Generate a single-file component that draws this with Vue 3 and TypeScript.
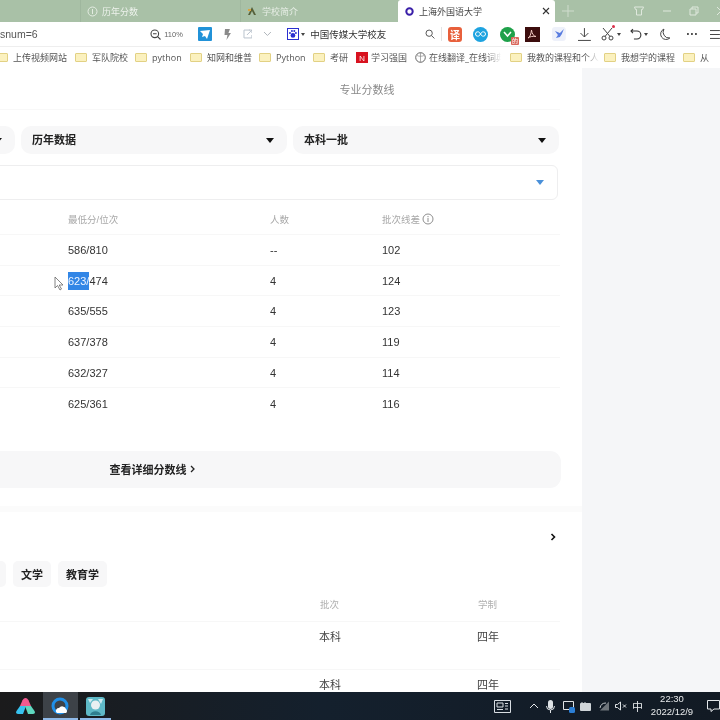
<script setup lang="ts">
interface Mark { kind: 'folder' | 'red' | 'globe'; text: string; w: number; fade?: boolean }
const marks: Mark[] = [
  { kind: 'folder', text: '上传视频网站', w: 79 },
  { kind: 'folder', text: '军队院校', w: 60 },
  { kind: 'folder', text: 'python', w: 55 },
  { kind: 'folder', text: '知网和维普', w: 69 },
  { kind: 'folder', text: 'Python', w: 54 },
  { kind: 'folder', text: '考研', w: 43 },
  { kind: 'red', text: '学习强国', w: 59 },
  { kind: 'globe', text: '在线翻译_在线词典', w: 95, fade: true },
  { kind: 'folder', text: '我教的课程和个人', w: 94, fade: true },
  { kind: 'folder', text: '我想学的课程', w: 79 },
  { kind: 'folder', text: '从', w: 30 },
]
const rows = [
  { score: '586/810', n: '--', diff: '102' },
  { score: '623/474', n: '4', diff: '124', picked: true },
  { score: '635/555', n: '4', diff: '123' },
  { score: '637/378', n: '4', diff: '119' },
  { score: '632/327', n: '4', diff: '114' },
  { score: '625/361', n: '4', diff: '116' },
]
</script>

<template>
  <div class="screen">
    <header class="tabs">
      <div class="tab t1">
        <svg width="11" height="11" viewBox="0 0 11 11"><circle cx="5.5" cy="5.5" r="4.5" fill="none" stroke="#e4ece2" /><path d="M5.5 3v5" stroke="#e4ece2" /></svg>
        <span>历年分数</span>
      </div>
      <div class="tab t2">
        <svg width="11" height="11" viewBox="0 0 11 11"><path d="M5 1l4 8H7L5 5 3 9H1z" fill="#55603a" /><path d="M1 3h3v2H1z" fill="#d9a441" /></svg>
        <span>学校简介</span>
      </div>
      <div class="tab active">
        <svg width="9" height="9" viewBox="0 0 9 9"><circle cx="4.5" cy="4.5" r="3.2" fill="none" stroke="#3a1fa8" stroke-width="2" /></svg>
        <span>上海外国语大学</span>
        <svg class="close" width="8" height="8" viewBox="0 0 8 8"><path d="M1 1l6 6M7 1L1 7" stroke="#333" stroke-width="1.1" /></svg>
      </div>
      <svg class="plus" width="12" height="12" viewBox="0 0 12 12"><path d="M6 0v12M0 6h12" stroke="#cfdccd" stroke-width="1" /></svg>
      <div class="winbtns">
        <svg width="12" height="12" viewBox="0 0 12 12"><path d="M1.5 2h9l-1 2.5h-1V10h-5V4.500h-1z" fill="none" stroke="#dfe8dd" /></svg>
        <svg width="10" height="10" viewBox="0 0 10 10"><path d="M1 5h8" stroke="#dfe8dd" /></svg>
        <svg width="10" height="10" viewBox="0 0 10 10"><path d="M1 3h6v6H1zM3 3V1h6v6H7" fill="none" stroke="#dfe8dd" /></svg>
        <svg width="10" height="10" viewBox="0 0 10 10"><path d="M1 1l8 8M9 1L1 9" stroke="#dfe8dd" /></svg>
      </div>
    </header>

    <div class="toolbar">
      <span class="url">snum=6</span>
      <svg class="zoomi" width="11" height="11" viewBox="0 0 11 11"><circle cx="4.800" cy="4.800" r="3.800" fill="none" stroke="#444" stroke-width="1.100" /><path d="M7.600 7.600L10.500 10.500M3 4.800h3.600" stroke="#444" stroke-width="1.100" /></svg>
      <span class="pct">110%</span>
      <span class="send"><svg width="10" height="9" viewBox="0 0 10 9"><path d="M0 1l10-1-3 9-2-3-3 1 1-3z" fill="#fff" /></svg></span>
      <svg class="bolt" width="7" height="11" viewBox="0 0 7 11"><path d="M1 0h5L4.500 4H7L2.500 11 3.500 6H.5z" fill="#8a8a8a" /></svg>
      <svg class="share" width="10" height="10" viewBox="0 0 10 10"><path d="M7 1h-6v8h8V6M4 6l5-5M6 1h3v3" fill="none" stroke="#b9c2cc" /></svg>
      <svg class="chev" width="9" height="6" viewBox="0 0 9 6"><path d="M1 1l3.500 3.500L8 1" fill="none" stroke="#aeb4ba" /></svg>
      <span class="paw"><svg width="10" height="10" viewBox="0 0 10 10"><circle cx="5" cy="6.500" r="2.400" fill="#2a2fd0" /><circle cx="2" cy="4" r="1" fill="#2a2fd0" /><circle cx="8" cy="4" r="1" fill="#2a2fd0" /><circle cx="4" cy="2" r="1" fill="#2a2fd0" /><circle cx="6.400" cy="2" r="1" fill="#2a2fd0" /></svg></span>
      <i class="mini-caret"></i>
      <span class="query">中国传媒大学校友</span>
      <svg class="mag" width="10" height="10" viewBox="0 0 10 10"><circle cx="4.200" cy="4.200" r="3.200" fill="none" stroke="#555" /><path d="M6.600 6.600L9.500 9.500" stroke="#555" /></svg>
      <i class="vsep"></i>
      <span class="ext red">译</span>
      <span class="ext cyan"><svg width="11" height="6" viewBox="0 0 11 6"><path d="M5.500 3C4.500 1 3.500.8 2.700.8a2.200 2.200 0 0 0 0 4.400C3.500 5.200 4.500 5 5.500 3c1-2 2-2.200 2.800-2.200a2.200 2.200 0 0 1 0 4.400C7.500 5.200 6.500 5 5.500 3z" fill="none" stroke="#fff" /></svg></span>
      <span class="ext green">
        <svg width="9" height="9" viewBox="0 0 9 9"><path d="M1 2l3.500 4L8 2" fill="none" stroke="#fff" stroke-width="1.500" /></svg>
        <b>的</b>
      </span>
      <span class="ext pdf"><svg width="10" height="10" viewBox="0 0 10 10"><path d="M1 9c2-1 3-4 3.500-8 .5 4 2 6 4.500 6.500-3-.5-6 0-8 1.500z" fill="none" stroke="#f0c8c0" stroke-width="1" /></svg></span>
      <svg class="bird" width="14" height="14" viewBox="0 0 14 14"><rect width="14" height="14" rx="3" fill="#eef1fa" /><path d="M12 2L8 6 3 4l3 4-2 3 4-1 2-3z" fill="#5a7de0" /></svg>
      <svg class="dl" width="13" height="13" viewBox="0 0 13 13"><path d="M6.500 0v9M2.500 5l4 4 4-4M0 12.500h13" fill="none" stroke="#444" /></svg>
      <span class="scissor">
        <svg width="14" height="14" viewBox="0 0 14 14"><circle cx="3" cy="11" r="2" fill="none" stroke="#444" /><circle cx="10" cy="11" r="2" fill="none" stroke="#444" /><path d="M4 9.500L11 1M9 9.500L2 1" stroke="#444" /></svg>
        <i class="dot"></i>
      </span>
      <i class="mini-caret dark"></i>
      <svg class="undo" width="13" height="12" viewBox="0 0 13 12"><path d="M1 3h6a4 4 0 0 1 0 8H4M3 1L1 3l2 2" fill="none" stroke="#333" stroke-width="1.100" /></svg>
      <i class="mini-caret dark"></i>
      <svg class="moon" width="12" height="13" viewBox="0 0 12 13"><path d="M5 1a5.500 5.500 0 1 0 6 9A6 6 0 0 1 5 1z" fill="none" stroke="#444" /></svg>
      <span class="dots">···</span>
      <svg class="menu" width="10" height="9" viewBox="0 0 10 9"><path d="M0 .5h10M0 4.500h10M0 8.500h10" stroke="#444" /></svg>
    </div>

    <nav class="marks">
      <div v-for="m in marks" :key="m.text" class="mark" :class="{ tight: m.kind !== 'folder' }" :style="{ width: m.w + 'px' }">
        <i v-if="m.kind === 'folder'" class="folder"></i>
        <i v-else-if="m.kind === 'red'" class="redmark">N</i>
        <svg v-else class="globe" width="11" height="11" viewBox="0 0 11 11"><circle cx="5.500" cy="5.500" r="4.800" fill="none" stroke="#666" /><path d="M5.500 .7v9.600M2 3.500c2 1 5 1 7 0" fill="none" stroke="#888" stroke-width=".7" /></svg>
        <span :class="{ fade: m.fade }">{{ m.text }}</span>
      </div>
    </nav>

    <div class="body">
      <main class="page">
        <div class="sheet">
          <section class="scores">
            <h2 class="title">专业分数线</h2>
            <div class="selects">
              <div class="pill"><i class="caret"></i></div>
              <div class="pill"><span>历年数据</span><i class="caret"></i></div>
              <div class="pill"><span>本科一批</span><i class="caret"></i></div>
            </div>
            <div class="major"><i class="caret blue"></i></div>
            <div class="row head">
              <span>最低分/位次</span>
              <span>人数</span>
              <span class="withinfo">批次线差
                <svg width="12" height="12" viewBox="0 0 12 12"><circle cx="6" cy="6" r="5" fill="none" stroke="#8e8e8e" /><path d="M6 5v4M6 3v1.200" stroke="#8e8e8e" /></svg>
              </span>
            </div>
            <div v-for="r in rows" :key="r.score" class="row">
              <span v-if="r.picked" class="scorecell">
                <svg class="cursor" width="10" height="15" viewBox="0 0 10 15"><path d="M1 1v11l2.500-2.500L6 14l1.500-1-2.300-4H9z" fill="#fff" stroke="#666" stroke-width=".8" /></svg>
                <mark>623/</mark>474
              </span>
              <span v-else>{{ r.score }}</span>
              <span>{{ r.n }}</span>
              <span>{{ r.diff }}</span>
            </div>
            <button class="detail">查看详细分数线 <svg width="5" height="8" viewBox="0 0 5 8"><path d="M1 1l3 3-3 3" fill="none" stroke="#222" stroke-width="1.300" /></svg></button>
          </section>

          <section class="majors">
            <div class="morebar">
              <svg width="6" height="8" viewBox="0 0 6 8"><path d="M1.500 1l3 3-3 3" fill="none" stroke="#111" stroke-width="1.600" /></svg>
            </div>
            <div class="tags">
              <span class="tag first"></span>
              <span class="tag">文学</span>
              <span class="tag">教育学</span>
            </div>
            <div class="mrow mhead"><span>批次</span><span>学制</span></div>
            <div class="mrow"><span>本科</span><span>四年</span></div>
            <div class="mrow"><span>本科</span><span>四年</span></div>
          </section>
        </div>
      </main>
      <aside class="side"></aside>
    </div>

    <footer class="taskbar">
      <div class="apps">
        <span class="app">
          <svg width="19" height="17" viewBox="0 0 19 17"><path d="M9.500 0c1.500 0 2.300 1 3 2.300L15 8H4l2.500-5.700C7.200 1 8 0 9.500 0z" fill="#f25a8f" /><path d="M4 8h6l-3 8H2C.300 16-.5 14.500.5 13z" fill="#37c3f0" /><path d="M9 8h6l3.500 5c1 1.500.2 3-1.500 3h-5z" fill="#5fd8c0" /></svg>
        </span>
        <span class="app on">
          <svg width="19" height="19" viewBox="0 0 19 19"><circle cx="9" cy="9" r="7" fill="none" stroke="#1f8fe8" stroke-width="3" /><path d="M5 15a3 3 0 0 1 3-4 4 4 0 0 1 7 1 2.500 2.500 0 0 1 0 4H6z" fill="#fff" /></svg>
        </span>
        <span class="app">
          <svg width="19" height="19" viewBox="0 0 19 19"><rect width="19" height="19" rx="3" fill="#5fb9c7" /><circle cx="9.500" cy="8" r="4.500" fill="#e8f0f2" /><path d="M4 18c1-5 10-5 11 0z" fill="#2f7f90" /><path d="M2 2h5L4 6zM12 2h5l-2 5z" fill="#cfeaf0" /></svg>
        </span>
      </div>
      <div class="tray">
        <svg class="news" width="17" height="13" viewBox="0 0 17 13"><path d="M.5.5h16v12H.500zM3 3h6v4H3zM3 9.500h6M11 3.500h3M11 6h3M11 9h3" fill="none" stroke="#d8dde2" /></svg>
        <svg class="up" width="10" height="6" viewBox="0 0 10 6"><path d="M1 5l4-4 4 4" fill="none" stroke="#e4e7ea" /></svg>
        <svg class="mic" width="9" height="13" viewBox="0 0 9 13"><rect x="2" width="5" height="9" rx="2.500" fill="#dfe3e6" /><path d="M.5 6a4 4 0 0 0 8 0M4.500 10v3" fill="none" stroke="#dfe3e6" /></svg>
        <svg class="screenico" width="13" height="13" viewBox="0 0 13 13"><path d="M.5 1.500h10v8H.500z" fill="none" stroke="#dfe3e6" /><rect x="6" y="7" width="6" height="6" rx="1.500" fill="#2c7fd6" /></svg>
        <svg class="batt" width="12" height="9" viewBox="0 0 12 9"><rect y="1" width="11" height="8" rx="1" fill="#cfd4d8" /><path d="M2 0v2M5 0v2" stroke="#cfd4d8" /></svg>
        <svg class="wifi" width="11" height="10" viewBox="0 0 11 10"><path d="M1 9.500L10 .5v9z" fill="#6e747a" /><path d="M1 7a6 6 0 0 1 6-5" fill="none" stroke="#bfc4c8" /></svg>
        <svg class="speaker" width="12" height="10" viewBox="0 0 12 10"><path d="M.5 3.500h2L5.500 1v8l-3-2.500h-2zM8 3.500l3 3M11 3.500l-3 3" fill="none" stroke="#dfe3e6" /></svg>
        <span class="ime">中</span>
        <div class="clock"><span>22:30</span><span>2022/12/9</span></div>
        <svg class="notice" width="13" height="12" viewBox="0 0 13 12"><path d="M.5.5h12v8.500H7L4 11.500V9H.5z" fill="none" stroke="#e4e7ea" /></svg>
      </div>
    </footer>
  </div>
</template>

<style scoped>
.screen {
  width: 720px;
  height: 720px;
  display: flex;
  flex-direction: column;
  overflow: hidden;
  background: #fff;
  color: #333;
  font-family: "Liberation Sans", "Noto Sans CJK SC", sans-serif;
  filter: blur(0.45px);
}
.tabs {
  height: 22px;
  flex: none;
  background: #a9c1a7;
  display: flex;
  align-items: stretch;
  padding-left: 80px;
  font-size: 9px;
  color: #edf2ec;
}
.tab {
  display: flex;
  align-items: center;
  gap: 4px;
  border-left: 1px solid #9fb79e;
  padding-left: 6px;
}
.t1 { width: 160px; padding-left: 6px; box-sizing: border-box; }
.t2 { width: 158px; box-sizing: border-box; padding-left: 6px; color: #e6ede5; }
.active {
  width: 157px;
  box-sizing: border-box;
  background: #fff;
  color: #444;
  border: 0;
  padding-left: 7px;
  border-radius: 3px 3px 0 0;
}
.active span { margin-left: 1px; }
.close { margin-left: auto; margin-right: 5px; }
.plus { align-self: center; margin-left: 7px; }
.winbtns {
  margin-left: auto;
  display: flex;
  align-items: center;
  gap: 17px;
  margin-right: -6px;
}
.toolbar {
  height: 24px;
  flex: none;
  display: flex;
  align-items: center;
  background: #fff;
  border-bottom: 1px solid #eeeeee;
  box-sizing: content-box;
}
.url { font-size: 10.5px; color: #555; width: 152px; }
.pct { font-size: 7.5px; color: #666; margin-left: 3px; width: 32px; }
.send {
  width: 14px; height: 14px; background: #2192d8; display: flex; align-items: center; justify-content: center;
  border-radius: 1px; margin-left: 2px;
}
.bolt { margin-left: 12px; }
.share { margin-left: 12px; }
.chev { margin-left: 11px; }
.paw {
  margin-left: 15px; width: 12px; height: 12px; border: 1px solid #2a2fd0; box-sizing: border-box;
  display: flex; align-items: center; justify-content: center; overflow: hidden;
}
.mini-caret {
  width: 0; height: 0; border: 2px solid transparent; border-top: 3px solid #444; border-bottom: 0; margin-left: 2px;
}
.query { font-size: 9.5px; color: #333; margin-left: 5px; width: 116px; }
.vsep { width: 1px; height: 14px; background: #e3e3e3; margin-left: 6px; }
.ext {
  width: 15px; height: 15px; display: flex; align-items: center; justify-content: center; position: relative;
  font-size: 10px; color: #fff; border-radius: 3px;
}
.red { background: #e8603c; margin-left: 6px; font-weight: 700; }
.cyan { background: #1ea3e0; border-radius: 50%; margin-left: 11px; }
.green { background: #1fa14a; border-radius: 50%; margin-left: 12px; }
.green b {
  position: absolute; right: -4px; bottom: -3px; font-size: 6px; background: #d9665a; padding: 0 1px; border-radius: 1px; font-weight: 400; line-height: 8px;
}
.pdf { background: #3c0d0d; border-radius: 0; margin-left: 10px; }
.bird { margin-left: 12px; }
.dl { margin-left: 12px; }
.scissor { margin-left: 10px; position: relative; display: flex; }
.dot { position: absolute; right: 0; top: -2px; width: 3px; height: 3px; border-radius: 50%; background: #d9304a; }
.dark { margin-left: 2px; }
.undo { margin-left: 9px; }
.moon { margin-left: 11px; }
.dots { margin-left: 15px; font-size: 12px; font-weight: 700; color: #444; width: 14px; }
.menu { margin-left: 10px; }
.zoomi { flex: none; }

.marks {
  height: 21px;
  flex: none;
  display: flex;
  align-items: center;
  margin-left: -4px;
  font-family: "Open Sans", "Noto Sans CJK SC", sans-serif;
  font-size: 9px;
  color: #555;
  background: #fff;
  white-space: nowrap;
  overflow: hidden;
}
.mark { display: flex; align-items: center; gap: 5px; flex: none; overflow: hidden; }
.tight { gap: 3px; }
.fade {
  width: 72px;
  overflow: hidden;
  -webkit-mask-image: linear-gradient(90deg, #000 80%, transparent);
  mask-image: linear-gradient(90deg, #000 80%, transparent);
}
.folder {
  width: 12px; height: 9px; flex: none; background: #fbf1bf; border: 1px solid #e2d184; box-sizing: border-box; border-radius: 1px;
}
.redmark {
  width: 12px; height: 11px; flex: none; background: #d8121f; color: #fff; font-size: 8px; font-style: normal; text-align: center; line-height: 11px;
}
.globe { flex: none; }

.body { flex: 1; display: flex; min-height: 0; overflow: hidden; }
.page { width: 582px; flex: none; background: #fff; overflow: hidden; }
.side { flex: 1; background: #f5f6f8; }
.sheet { width: 782px; margin-left: -200px; }

.scores { height: 438px; padding-right: 22px; box-sizing: border-box; }
.title {
  margin: 0;
  height: 42px;
  line-height: 44px;
  border-bottom: 1px solid #f8f8f8;
  box-sizing: border-box;
  font-size: 11px;
  font-weight: 400;
  color: #8a8a8a;
  text-align: center;
  padding-left: 374px;
}
.selects {
  margin-top: 16px;
  display: grid;
  grid-template-columns: 215px 266px 266px;
  gap: 6px;
}
.pill {
  height: 28px;
  background: #f7f7f8;
  border-radius: 10px;
  display: flex;
  align-items: center;
  justify-content: space-between;
  padding: 0 13px 0 11px;
  box-sizing: border-box;
  font-size: 11px;
  font-weight: 700;
  color: #222;
}
.pill span { margin-top: -2px; }
.pill:first-child { justify-content: flex-end; }
.caret {
  width: 0; height: 0; border: 4px solid transparent; border-top: 5px solid #111; border-bottom: 0;
}
.major {
  margin-top: 11px;
  width: 758px;
  height: 35px;
  box-sizing: border-box;
  border: 1px solid #eeeeef;
  border-radius: 6px;
  display: flex;
  align-items: center;
  justify-content: flex-end;
  padding-right: 13px;
}
.blue { border-top-color: #4a90d9; }
.row {
  display: grid;
  grid-template-columns: 202px 112px 1fr;
  padding-left: 268px;
  height: 30.700px;
  align-items: center;
  border-bottom: 1px solid #f7f7f7;
  box-sizing: border-box;
  font-size: 11px;
  color: #333;
  width: 760px;
}
.row:nth-last-child(2) { border-bottom: 0; }
.head { height: 35px; padding-top: 3px; font-size: 9.500px; color: #a8a8a8; }
.withinfo { display: flex; align-items: center; gap: 2px; }
.scorecell { position: relative; }
.scorecell mark { background: #3286e6; color: #eef5ff; padding: 3px 0; }
.cursor { position: absolute; left: -14px; top: 1px; }
.detail {
  display: flex;
  align-items: center;
  justify-content: center;
  gap: 3px;
  margin-top: 32px;
  width: 761px;
  height: 37px;
  background: #f7f7f8;
  border: 0;
  border-radius: 11px;
  font: 700 11px "Liberation Sans", "Noto Sans CJK SC", sans-serif;
  color: #222;
  padding: 0 57px 2px 0;
}
.majors {
  border-top: 6px solid #fbfbfb;
}
.morebar {
  height: 49px;
  padding: 1px 26px 0 0;
  box-sizing: border-box;
  display: flex;
  align-items: center;
  justify-content: flex-end;
}
.tags { display: flex; gap: 7px; }
.tag {
  height: 26px;
  padding: 0 8px;
  background: #f7f7f8;
  border-radius: 5px;
  font-size: 11px;
  font-weight: 700;
  color: #222;
  display: flex;
  align-items: center;
}
.first { width: 206px; box-sizing: border-box; }
.mrow {
  display: grid;
  grid-template-columns: 158px 80px;
  padding: 7px 0 0 519px;
  height: 48px;
  width: 760px;
  box-sizing: border-box;
  align-items: start;
  line-height: 16px;
  border-bottom: 1px solid #f7f7f7;
  font-size: 11px;
  color: #444;
}
.mhead {
  height: 33px;
  margin-top: 2px;
  padding: 0 0 0 520px;
  align-items: center;
  font-size: 9.500px;
  color: #b0b0b0;
}

.taskbar {
  height: 28px;
  flex: none;
  background: linear-gradient(90deg, #1b1b1c 0%, #14202d 45%, #121a24 100%);
  display: flex;
  justify-content: space-between;
  color: #e8eaec;
}
.apps { display: flex; padding-left: 8px; }
.app {
  width: 35px;
  display: flex;
  align-items: center;
  justify-content: center;
}
.app:nth-child(2) { box-shadow: inset 0 -2px 0 #8fb9e8; }
.app:nth-child(3) { box-shadow: inset 0 -2px 0 #8fb9e8; width: 31px; margin-left: 2px; }
.on { background: #3d4248; }
.tray { display: flex; align-items: center; }
.up { margin-left: 18px; }
.mic { margin-left: 7px; }
.screenico { margin-left: 8px; }
.batt { margin-left: 4px; }
.wifi { margin-left: 7px; }
.speaker { margin-left: 5px; }
.ime { font-size: 11px; margin-left: 5px; }
.clock {
  display: flex; flex-direction: column; align-items: center; font-size: 9.500px; line-height: 13px; margin: -2px 0 0 5px; width: 48px;
}
.notice { margin-left: 11px; margin-right: 0; }
</style>

<style>
html, body { margin: 0; overflow: hidden; }
</style>
